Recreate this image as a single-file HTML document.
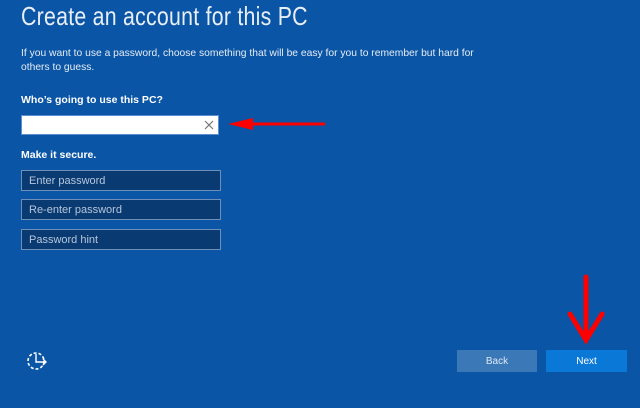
<!DOCTYPE html>
<html><head><meta charset="utf-8"><style>
html,body{margin:0;padding:0}
body{width:640px;height:408px;background:#0a55a5;position:relative;overflow:hidden;font-family:"Liberation Sans",sans-serif;color:#fff}
.a{position:absolute;white-space:nowrap}
.in{position:absolute;left:21px;height:19px;background:#0a3a72;border:1px solid #6d8fb8;font-size:11px;color:#b5c6dc;line-height:20px;padding-left:7px;width:191px}
.btn{position:absolute;top:350px;height:22px;width:80px;font-size:10px;text-align:center;line-height:23px}
</style></head><body>
<div class="a" style="left:21px;top:1px;font-size:26px;color:#e8eef6;transform:scaleX(0.82);transform-origin:0 0;letter-spacing:0.3px">Create an account for this PC</div>
<div class="a" style="left:21px;top:47px;font-size:10.3px;line-height:14px;color:#e6ecf5">If you want to use a password, choose something that will be easy for you to remember but hard for<br>others to guess.</div>
<div class="a" style="left:21px;top:94px;font-size:10.5px;font-weight:bold">Who’s going to use this PC?</div>
<div style="position:absolute;left:21px;top:115px;width:196px;height:18px;background:#fff;border:1px solid #5a8ed0"></div>
<svg class="a" style="left:203px;top:119px" width="12" height="12"><path d="M2 2L10 10M10 2L2 10" stroke="#777" stroke-width="1.2"/></svg>
<div class="a" style="left:21px;top:149px;font-size:10.5px;font-weight:bold">Make it secure.</div>
<div class="in" style="top:170px">Enter password</div>
<div class="in" style="top:199px">Re-enter password</div>
<div class="in" style="top:229px">Password hint</div>
<svg class="a" style="left:0;top:0" width="640" height="408">
<path d="M252 124L325 124" stroke="#f00" stroke-width="3"/>
<path d="M228 124L253 118L253 130Z" fill="#f00"/>
<path d="M586 277L586 340M570 314L586 340L602 314" stroke="#f00" stroke-width="5" fill="none" stroke-linecap="round"/>
<circle cx="36" cy="361" r="8" fill="none" stroke="#fff" stroke-width="1.6" stroke-dasharray="3 2"/>
<path d="M36 354L36 362L46 362M43 359L46 362L43 365" stroke="#fff" stroke-width="1.4" fill="none"/>
</svg>
<div class="btn" style="left:457px;background:#3a78b8;color:#dde8f4">Back</div>
<div class="btn" style="left:546px;width:81px;background:#0a78d7">Next</div>
</body></html>
